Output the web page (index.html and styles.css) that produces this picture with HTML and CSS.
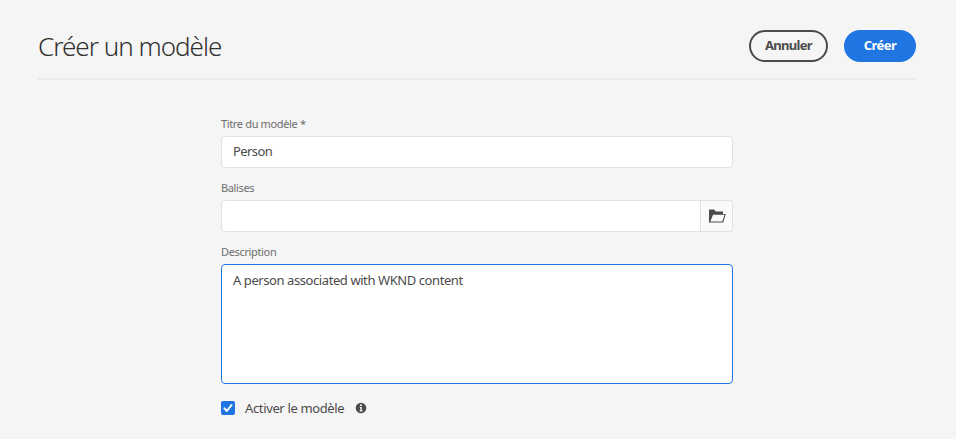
FILE: index.html
```html
<!DOCTYPE html>
<html lang="fr">
<head>
<meta charset="utf-8">
<title>Créer un modèle</title>
<link rel="stylesheet" href="styles.css">
</head>
<body>
<header class="header">
  <h1 class="title"><span>Créer un modèle</span></h1>
  <div class="actions">
    <button class="btn btn-secondary" type="button"><span>Annuler</span></button>
    <button class="btn btn-primary" type="button"><span>Créer</span></button>
  </div>
</header>
<main class="form">
  <label class="label label-title" for="name">Titre du modèle *</label>
  <input class="field name" id="name" type="text" value="Person">
  <label class="label label-tags" for="tags">Balises</label>
  <div class="picker">
    <input class="field picker-input" id="tags" type="text">
    <button class="picker-button" type="button" aria-label="Parcourir">
      <svg width="18" height="14" viewBox="0 0 18 14"><path fill="#4b4b4b" fill-rule="evenodd" d="M1 13.5V1L1.5.5H6L8 2.5H15V5H17.8L15.2 13.5ZM5 5.8 2.3 12.6H14.3L16.5 5.8Z"/></svg>
    </button>
  </div>
  <label class="label label-desc" for="desc">Description</label>
  <textarea class="field description" id="desc">A person associated with WKND content</textarea>
  <div class="enable">
    <span class="checkbox" role="checkbox" aria-checked="true">
      <svg width="14" height="14" viewBox="0 0 14 14"><path fill="none" stroke="#fff" stroke-width="2" stroke-linecap="round" stroke-linejoin="round" d="M3.4 7.4 5.8 10 10.6 4"/></svg>
    </span>
    <span class="enable-text">Activer le modèle</span>
    <svg class="info" width="12" height="12" viewBox="0 0 12 12"><circle cx="6" cy="6" r="5.3" fill="#4b4b4b"/><circle cx="6" cy="3.2" r="1" fill="#f5f5f5"/><path fill="#f5f5f5" d="M4.7 5H6.8V8.4H7.5V9.4H4.6V8.4H5.3V6H4.7Z"/></svg>
  </div>
</main>
</body>
</html>
```
FILE: styles.css
```css
* { box-sizing: border-box; }
body {
  margin: 0;
  height: 439px;
  overflow: hidden;
  background: #f5f5f5;
  color: #4b4b4b;
  font: 13px/18px "Noto Sans", sans-serif;
}
.header {
  display: flex;
  justify-content: space-between;
  height: 80px;
  margin: 0 40px 0 38px;
  padding-top: 30px;
  border-bottom: 2px solid #eaeaea;
}
.title {
  margin: 0;
  color: #323232;
  font-size: 26px;
  font-weight: 300;
  line-height: 32px;
  letter-spacing: -1px;
}
.actions { display: flex; gap: 16px; }
.btn {
  height: 32px;
  padding: 0 0 2px;
  border: 2px solid #4b4b4b;
  border-radius: 16px;
  background: transparent;
  color: #4b4b4b;
  font: bold 13px/26px "Noto Sans", sans-serif;
  letter-spacing: -0.7px;
}
.btn-secondary { width: 79px; }
.btn-primary {
  width: 72px;
  border-color: #1f76e3;
  background: #1f76e3;
  color: #fff;
  letter-spacing: -0.55px;
}
.form { width: 512px; margin: 36px 0 0 221px; }
.label {
  display: block;
  height: 20px;
  color: #6e6e6e;
  font-size: 11px;
  line-height: 16px;
  letter-spacing: -0.35px;
}
.field {
  display: block;
  width: 100%;
  height: 32px;
  margin: 0 0 12px;
  padding: 0 11px 2px;
  border: 1px solid #e1e1e1;
  border-radius: 4px;
  outline: none;
  background: #fff;
  color: #4b4b4b;
  font: 13px/18px "Noto Sans", sans-serif;
  letter-spacing: -0.6px;
}
.picker { display: flex; height: 32px; margin-bottom: 12px; }
.picker-input { width: 480px; margin: 0; border-radius: 4px 0 0 4px; }
.picker-button {
  width: 32px;
  padding: 0;
  border: 1px solid #e1e1e1;
  border-left: 0;
  border-radius: 0 4px 4px 0;
  background: #fafafa;
}
.picker-button svg { display: block; margin: 0 auto; }
.description {
  height: 120px;
  margin-bottom: 16px;
  padding: 6px 11px;
  border-color: #1f76e3;
  letter-spacing: -0.42px;
  resize: none;
}
.enable { display: flex; align-items: center; height: 16px; }
.checkbox {
  width: 14px;
  height: 14px;
  border-radius: 2px;
  background: #1f76e3;
}
.checkbox svg { display: block; }
.enable-text { width: 100px; margin-left: 10px; white-space: nowrap; letter-spacing: -0.36px; }
.info { margin-left: 10px; }
```
